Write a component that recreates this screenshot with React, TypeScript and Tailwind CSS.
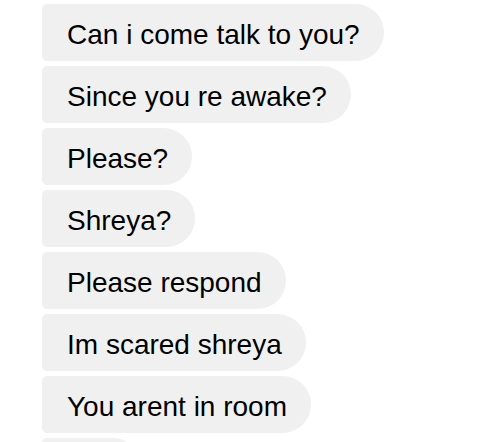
const messages = [
  'Can i come talk to you?',
  'Since you re awake?',
  'Please?',
  'Shreya?',
  'Please respond',
  'Im scared shreya',
  'You arent in room',
  'Hey',
]

export default function App() {
  return (
    <main className="h-[442px] w-[484px] overflow-hidden bg-white">
      <div className="flex flex-col items-start gap-[5px] pl-[42px] pt-[4px]">
        {messages.map((text, i) => (
          <div
            key={i}
            className="h-[57px] flex items-center rounded-l-[5px] rounded-r-[29px] bg-[#f0f0f0] pt-[4px] pl-[25px] pr-[24px] font-['Liberation_Sans',Arial,sans-serif] text-[28px] leading-[33px] text-black whitespace-nowrap"
          >
            {text}
          </div>
        ))}
      </div>
    </main>
  )
}
